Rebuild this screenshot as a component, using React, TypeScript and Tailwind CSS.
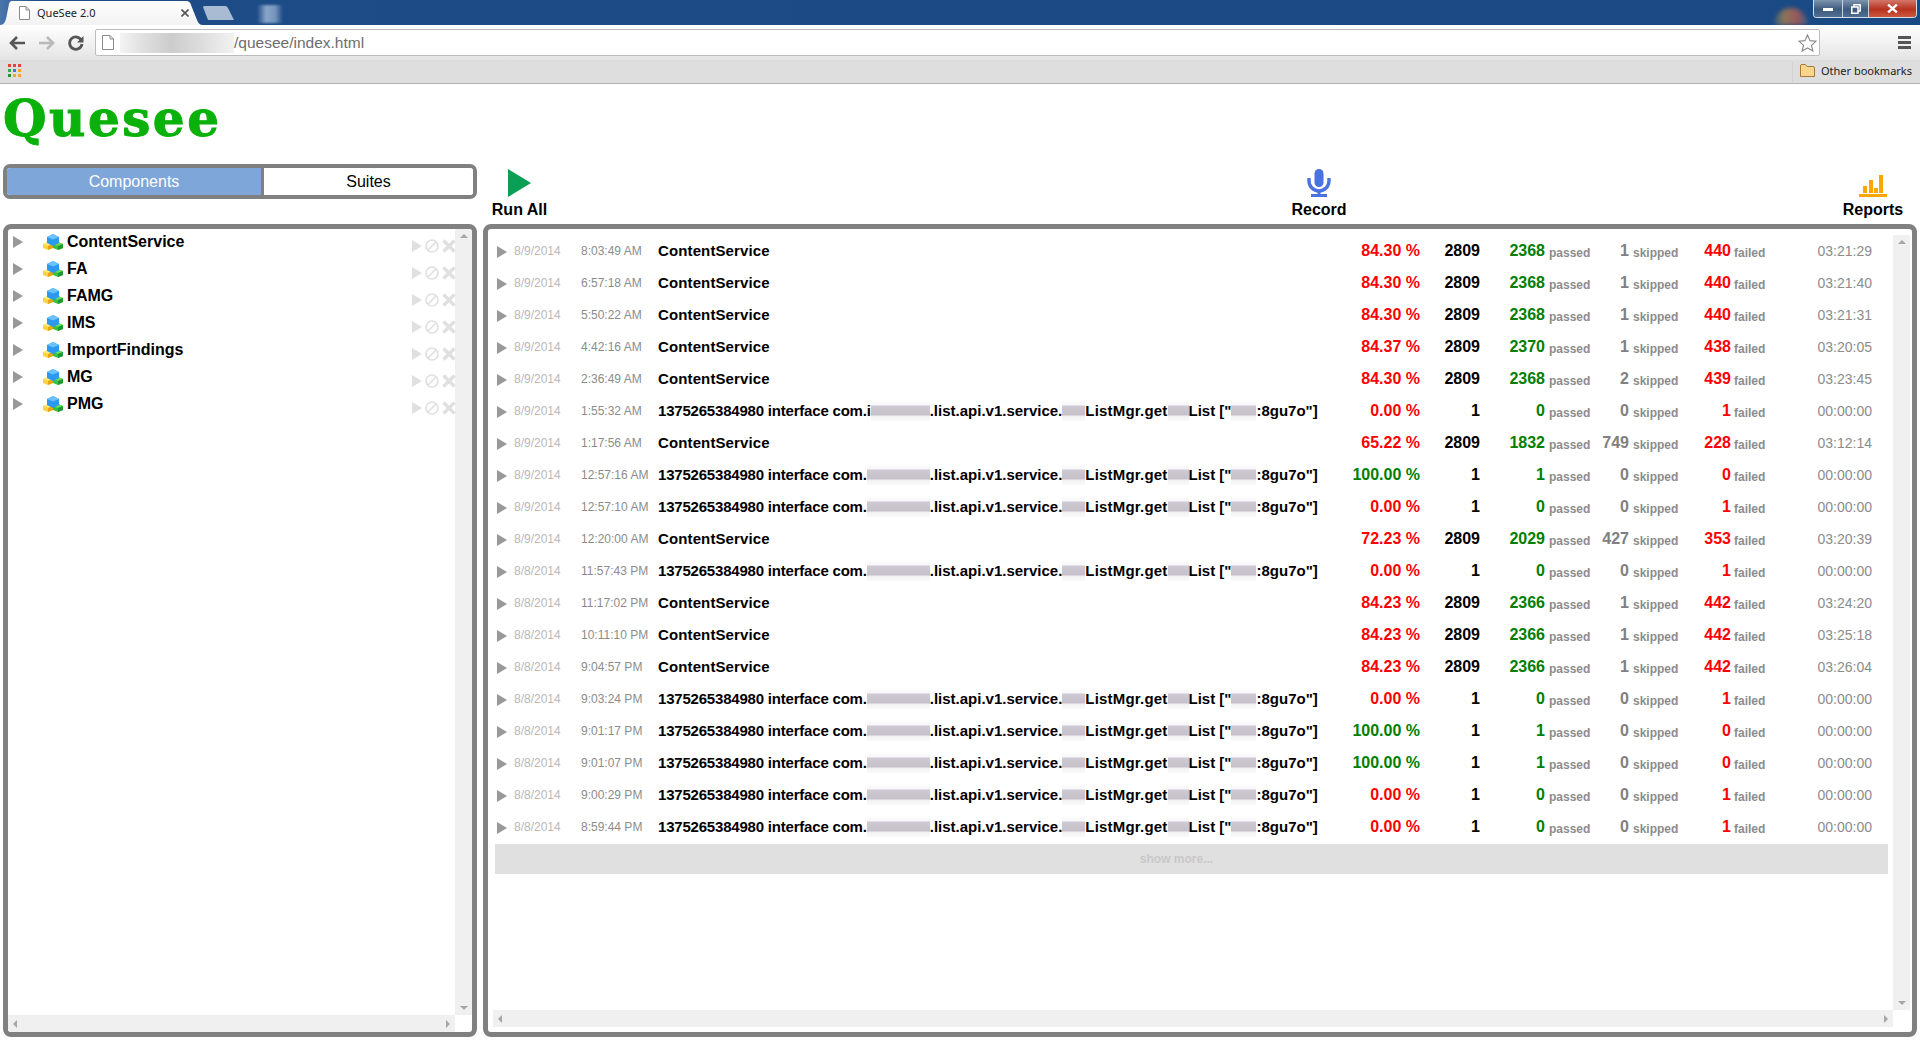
import React from "react";

const SANS = "font-['Liberation_Sans',Arial,sans-serif]";

function Blur({ w }: { w: number }) {
  return (
    <span
      className="inline-block h-[20px] align-[-5px] bg-[linear-gradient(180deg,#fbfbfb_0%,#f8f7f9_22%,#cfc9d2_23%,#c6c0ca_72%,#f1f1f1_73%,#fbfbfb_100%)]"
      style={{ width: w }}
    />
  );
}

function Arrow({ className }: { className: string }) {
  return (
    <svg viewBox="0 0 10 12" className={className} fill="currentColor">
      <path d="M0 0 L10 6 L0 12 Z" />
    </svg>
  );
}

function Cubes() {
  return (
    <svg viewBox="0 0 20 16" className="w-[20px] h-[16px] shrink-0">
      <path d="M0 10 L5 8 L10 10 L10 14 L5 16 L0 14 Z" fill="#fbd33a" />
      <path d="M0 10 L5 12 L10 10 L5 8 Z" fill="#ffe97a" />
      <path d="M5 12 L10 10 L10 14 L5 16 Z" fill="#e3a80f" />
      <path d="M10 10 L15 8 L20 10 L20 14 L15 16 L10 14 Z" fill="#3fbf3f" />
      <path d="M10 10 L15 12 L20 10 L15 8 Z" fill="#6adc5c" />
      <path d="M15 12 L20 10 L20 14 L15 16 Z" fill="#1e9a34" />
      <path d="M4 3 L10 0 L16 3 L16 9 L10 12 L4 9 Z" fill="#2c98f0" />
      <path d="M4 3 L10 5.5 L16 3 L10 0 Z" fill="#6cc2fb" />
    </svg>
  );
}

const tree = ["ContentService", "FA", "FAMG", "IMS", "ImportFindings", "MG", "PMG"];

function TreeRow({ name }: { name: string }) {
  return (
    <div className="h-[27px] flex items-center relative">
      <Arrow className="w-[10px] h-[12px] ml-[5px] text-[#999999] shrink-0" />
      <span className="w-[20px] ml-[20px] shrink-0 flex">
        <Cubes />
      </span>
      <span className="ml-[4px] text-[16px] font-bold text-black leading-none">{name}</span>
      <div className="ml-auto mr-[-1px] flex items-center gap-[3px] mt-[8px] text-[#e0e0e0]">
        <Arrow className="w-[10px] h-[14px]" />
        <svg viewBox="0 0 14 14" className="w-[14px] h-[14px]" fill="none" stroke="currentColor" strokeWidth="1.7">
          <circle cx="7" cy="7" r="6" />
          <path d="M3 11 L11 3" />
        </svg>
        <svg viewBox="0 0 14 14" className="w-[14px] h-[14px]" fill="none" stroke="currentColor" strokeWidth="3.4">
          <path d="M1.5 1.5 L12.5 12.5 M12.5 1.5 L1.5 12.5" />
        </svg>
      </div>
    </div>
  );
}

type Row = [string, string, number, string, string, string, string, string, string];
const C = 0;
const I = 1;
const rows: Row[] = [
  ["8/9/2014", "8:03:49 AM", C, "84.30 %", "2809", "2368", "1", "440", "03:21:29"],
  ["8/9/2014", "6:57:18 AM", C, "84.30 %", "2809", "2368", "1", "440", "03:21:40"],
  ["8/9/2014", "5:50:22 AM", C, "84.30 %", "2809", "2368", "1", "440", "03:21:31"],
  ["8/9/2014", "4:42:16 AM", C, "84.37 %", "2809", "2370", "1", "438", "03:20:05"],
  ["8/9/2014", "2:36:49 AM", C, "84.30 %", "2809", "2368", "2", "439", "03:23:45"],
  ["8/9/2014", "1:55:32 AM", I, "0.00 %", "1", "0", "0", "1", "00:00:00"],
  ["8/9/2014", "1:17:56 AM", C, "65.22 %", "2809", "1832", "749", "228", "03:12:14"],
  ["8/9/2014", "12:57:16 AM", I, "100.00 %", "1", "1", "0", "0", "00:00:00"],
  ["8/9/2014", "12:57:10 AM", I, "0.00 %", "1", "0", "0", "1", "00:00:00"],
  ["8/9/2014", "12:20:00 AM", C, "72.23 %", "2809", "2029", "427", "353", "03:20:39"],
  ["8/8/2014", "11:57:43 PM", I, "0.00 %", "1", "0", "0", "1", "00:00:00"],
  ["8/8/2014", "11:17:02 PM", C, "84.23 %", "2809", "2366", "1", "442", "03:24:20"],
  ["8/8/2014", "10:11:10 PM", C, "84.23 %", "2809", "2366", "1", "442", "03:25:18"],
  ["8/8/2014", "9:04:57 PM", C, "84.23 %", "2809", "2366", "1", "442", "03:26:04"],
  ["8/8/2014", "9:03:24 PM", I, "0.00 %", "1", "0", "0", "1", "00:00:00"],
  ["8/8/2014", "9:01:17 PM", I, "100.00 %", "1", "1", "0", "0", "00:00:00"],
  ["8/8/2014", "9:01:07 PM", I, "100.00 %", "1", "1", "0", "0", "00:00:00"],
  ["8/8/2014", "9:00:29 PM", I, "0.00 %", "1", "0", "0", "1", "00:00:00"],
  ["8/8/2014", "8:59:44 PM", I, "0.00 %", "1", "0", "0", "1", "00:00:00"],
];

function Name({ kind, index }: { kind: number; index: number }) {
  if (kind === C) return <span className="tracking-[0.12px]">ContentService</span>;
  return (
    <span className="whitespace-nowrap">
      <span className="tracking-[-0.2px]">1375265384980 interface com.{index === 5 ? "i" : ""}</span>
      <Blur w={index === 5 ? 59 : 63} />
      .list.api.v1.service.
      <Blur w={23} />
      <span className="tracking-[0.2px]">ListMgr.get</span>
      <Blur w={21} />
      List ["
      <Blur w={25} />
      :8gu7o"]
    </span>
  );
}

function ResultRow({ r, index }: { r: Row; index: number }) {
  const ok = r[3].startsWith("100");
  return (
    <div className="h-[32px] flex items-center text-black whitespace-nowrap">
      <Arrow className="w-[10px] h-[12px] ml-[9px] mt-[2px] text-[#999999] shrink-0" />
      <span className="w-[67px] ml-[7px] text-[12px] text-[#b8b8b8] shrink-0">{r[0]}</span>
      <span className="w-[77px] text-[12px] text-[#8c8c8c] shrink-0">{r[1]}</span>
      <span className="w-[682px] text-[15px] font-bold shrink-0">
        <Name kind={r[2]} index={index} />
      </span>
      <span className={`w-[80px] text-right text-[16px] font-bold shrink-0 ${ok ? "text-[#008000]" : "text-[#ff0000]"}`}>{r[3]}</span>
      <span className="w-[60px] text-right text-[16px] font-bold shrink-0">{r[4]}</span>
      <span className="w-[65px] text-right text-[16px] font-bold text-[#008000] shrink-0">{r[5]}</span>
      <span className="w-[47px] pl-[4px] text-[12px] font-bold text-[#8c8c8c] mt-[3px] shrink-0">passed</span>
      <span className="w-[37px] text-right text-[16px] font-bold text-[#808080] shrink-0">{r[6]}</span>
      <span className="w-[66px] pl-[4px] text-[12px] font-bold text-[#8c8c8c] mt-[3px] shrink-0">skipped</span>
      <span className="w-[36px] text-right text-[16px] font-bold text-[#ff0000] shrink-0">{r[7]}</span>
      <span className="w-[79px] pl-[3px] text-[12px] font-bold text-[#8c8c8c] mt-[3px] shrink-0">failed</span>
      <span className="w-[62px] text-right text-[14px] text-[#8c8c8c] shrink-0">{r[8]}</span>
    </div>
  );
}

function ScrollV({ className = "" }: { className?: string }) {
  return (
    <div className={`w-[17px] bg-[#f0f0f0] flex flex-col items-center justify-between py-[5px] shrink-0 ${className}`}>
      <div className="w-0 h-0 border-x-[4px] border-x-transparent border-b-[4px] border-b-[#a6a6a6]" />
      <div className="w-0 h-0 border-x-[4px] border-x-transparent border-t-[4px] border-t-[#a6a6a6]" />
    </div>
  );
}

function ScrollH({ className = "" }: { className?: string }) {
  return (
    <div className={`h-[17px] bg-[#f0f0f0] flex items-center justify-between px-[5px] ${className}`}>
      <div className="w-0 h-0 border-y-[4px] border-y-transparent border-r-[4px] border-r-[#a6a6a6]" />
      <div className="w-0 h-0 border-y-[4px] border-y-transparent border-l-[4px] border-l-[#a6a6a6]" />
    </div>
  );
}

function BrowserChrome() {
  return (
    <div className="shrink-0">
      <div className="h-[25px] bg-[linear-gradient(90deg,#4a76ab_0%,#1d4c87_2%,#1b4a85_60%,#1a4a84_100%)] flex relative overflow-hidden">
        <div className="relative w-[203px] h-[25px] flex items-center shrink-0">
          <svg viewBox="0 0 203 25" className="absolute inset-0 w-[203px] h-[25px]" preserveAspectRatio="none">
            <defs>
              <linearGradient id="tabg" x1="0" y1="0" x2="0" y2="1">
                <stop offset="0" stopColor="#ffffff" />
                <stop offset="1" stopColor="#f2f2f2" />
              </linearGradient>
            </defs>
            <path d="M0 25 C5 25 6 20 7 14 L9 4 C10 1 11 1 13 1 L186 1 C189 1 190 2 191 5 L197 20 C198 23 200 25 203 25 Z" fill="url(#tabg)" />
          </svg>
          <svg viewBox="0 0 11 14" className="relative ml-[19px] w-[11px] h-[14px] shrink-0" fill="#ffffff" stroke="#8a8a8a">
            <path d="M0.5 0.5 H7 L10.5 4 V13.5 H0.5 Z M7 0.5 V4 H10.5" />
          </svg>
          <span className="relative ml-[7px] w-[144px] text-[11px] text-[#222] font-['Noto_Sans',sans-serif] leading-none">QueSee 2.0</span>
          <svg viewBox="0 0 8 8" className="relative w-[8px] h-[8px] shrink-0" stroke="#555" strokeWidth="1.6">
            <path d="M0.5 0.5 L7.5 7.5 M7.5 0.5 L0.5 7.5" />
          </svg>
        </div>
        <svg viewBox="0 0 31 14" className="w-[31px] h-[14px] mt-[6px] shrink-0">
          <path d="M0 1 Q0 0 2 0 H22 Q24 0 25 2 L31 14 H5 Z" fill="#a9bbd3" />
        </svg>
        <div className="w-[26px] h-[18px] ml-[23px] mt-[5px] bg-[linear-gradient(90deg,#1d4c87,#8aa6ca_35%,#7695bd_70%,#1d4c87)] blur-[1px] shrink-0" />
        <div className="ml-auto mr-[112px] mt-[8px] w-[34px] h-[17px] rounded-t-full bg-[linear-gradient(90deg,#3d6180,#a8804e_30%,#b85a52_70%,#3d5f86)] blur-[2px] opacity-80" />
        <div className="absolute right-[3px] top-0 w-[104px] h-[18px] flex border border-t-0 border-[#d6dde6] rounded-b-[4px] overflow-hidden">
          <div className="w-[29px] bg-[linear-gradient(180deg,#7d93ad,#3d5a7f_55%,#516f92)] flex items-center justify-center border-r border-[#c8d2de]">
            <div className="w-[10px] h-[3px] mt-[2px] bg-white" />
          </div>
          <div className="w-[26px] bg-[linear-gradient(180deg,#7d93ad,#3d5a7f_55%,#516f92)] flex items-center justify-center border-r border-[#c8d2de]">
            <svg viewBox="0 0 10 10" className="w-[10px] h-[10px]" fill="none" stroke="#fff" strokeWidth="1.5">
              <path d="M3 2.5 V0.8 H9.2 V7 H7.5 M0.8 3 H7 V9.2 H0.8 Z" />
            </svg>
          </div>
          <div className="flex-1 bg-[linear-gradient(180deg,#d2776a,#b8321f_55%,#cc5a3f)] flex items-center justify-center">
            <svg viewBox="0 0 10 8" className="w-[11px] h-[9px]" stroke="#fff" strokeWidth="2.2">
              <path d="M1 0.5 L9 7.5 M9 0.5 L1 7.5" />
            </svg>
          </div>
        </div>
      </div>
      <div className="h-[35px] bg-[linear-gradient(180deg,#ffffff,#e4e4e4)] flex items-center">
        <svg viewBox="0 0 16 14" className="ml-[9px] w-[16px] h-[14px] shrink-0" fill="none" stroke="#555555" strokeWidth="2.6">
          <path d="M16 7 H3 M8 1 L2 7 L8 13" />
        </svg>
        <svg viewBox="0 0 16 14" className="ml-[14px] w-[16px] h-[14px] shrink-0" fill="none" stroke="#b9b9b9" strokeWidth="2.6">
          <path d="M0 7 H13 M8 1 L14 7 L8 13" />
        </svg>
        <svg viewBox="0 0 16 16" className="ml-[13px] w-[16px] h-[16px] shrink-0" fill="none" stroke="#555555" strokeWidth="2.8">
          <path d="M13.5 5.5 A6.2 6.2 0 1 0 14 9" />
          <path d="M15.5 1 V7.5 H9 Z" fill="#555555" stroke="none" />
        </svg>
        <div className="ml-[11px] w-[1725px] h-[27px] bg-white border border-[#bcbcbc] rounded-[2px] flex items-center shrink-0">
          <svg viewBox="0 0 12 15" className="ml-[6px] w-[12px] h-[15px] shrink-0" fill="#ffffff" stroke="#8a8a8a">
            <path d="M0.5 0.5 H8 L11.5 4 V14.5 H0.5 Z M8 0.5 V4 H11.5" />
          </svg>
          <span className="ml-[6px] w-[114px] h-[20px] shrink-0 bg-[linear-gradient(90deg,#f4f4f4,#e0e0e0_20%,#cccccc_45%,#dcdcdc_70%,#f2f2f2)]" />
          <span className={`text-[15.5px] text-[#6d6d6d] leading-none ${SANS}`}>/quesee/index.html</span>
          <svg viewBox="0 0 20 19" className="ml-auto mr-[2px] w-[19px] h-[18px]" fill="#ffffff" stroke="#8a8a8a" strokeWidth="1.2">
            <path d="M10 1 L12.7 7 L19 7.6 L14.2 12 L15.7 18 L10 14.8 L4.3 18 L5.8 12 L1 7.6 L7.3 7 Z" />
          </svg>
        </div>
        <div className="ml-[78px] w-[13px] flex flex-col gap-[2px] shrink-0">
          <div className="h-[3px] bg-[#555]" />
          <div className="h-[3px] bg-[#555]" />
          <div className="h-[3px] bg-[#555]" />
        </div>
      </div>
      <div className="h-[24px] bg-[#dedede] border-b border-[#b0b0b0] flex items-center">
        <div className="ml-[8px] -mt-[3px] grid grid-cols-3 gap-[2px] w-[13px] shrink-0">
          <div className="h-[3px] bg-[#e8403a]" />
          <div className="h-[3px] bg-[#e8403a]" />
          <div className="h-[3px] bg-[#e8403a]" />
          <div className="h-[3px] bg-[#3fa34d]" />
          <div className="h-[3px] bg-[#3b78e7]" />
          <div className="h-[3px] bg-[#f5a623]" />
          <div className="h-[3px] bg-[#2f8f46]" />
          <div className="h-[3px] bg-[#f5a623]" />
          <div className="h-[3px] bg-[#f5a623]" />
        </div>
        <div className="ml-auto w-px h-[20px] bg-[#d2d2d2]" />
        <svg viewBox="0 0 15 13" className="ml-[7px] -mt-[2px] w-[15px] h-[13px] shrink-0" fill="#fbd68c" stroke="#a9793a">
          <path d="M0.5 2 Q0.5 0.5 2 0.5 H5.5 L7 2.5 H13 Q14.5 2.5 14.5 4 V12.5 H0.5 Z" />
        </svg>
        <span className="ml-[6px] mr-[8px] -mt-[2px] text-[11px] text-[#222] font-['Noto_Sans',sans-serif] leading-none">Other bookmarks</span>
      </div>
    </div>
  );
}

export default function App() {
  return (
    <div className={`w-[1920px] h-[1040px] overflow-hidden bg-white flex flex-col ${SANS}`}>
      <BrowserChrome />
      <div className="h-[80px] pl-[3px] shrink-0">
        <div className="mt-[5px] text-[50px] leading-[60px] font-bold tracking-[2.5px] text-[#0ab10a] [-webkit-text-stroke:1px_#0ab10a] font-['DejaVu_Serif',serif]">Quesee</div>
      </div>
      <div className="flex-1 min-h-0 flex gap-[6px] pl-[3px] pr-[3px] pb-[3px]">
        <div className="w-[474px] flex flex-col shrink-0">
          <div className="h-[35px] border-[4px] border-[#808080] rounded-[7px] flex text-[16px] overflow-hidden shrink-0">
            <div className="w-[254px] bg-[#7ea6d8] text-white flex items-center justify-center">Components</div>
            <div className="flex-1 border-l-[3px] border-[#808080] bg-white text-black flex items-center justify-center">Suites</div>
          </div>
          <div className="mt-[25px] flex-1 min-h-0 border-[5px] border-[#808080] rounded-[8px] flex flex-col overflow-hidden">
            <div className="flex-1 min-h-0 flex">
              <div className="flex-1 -mt-[1px]">
                {tree.map((t) => (
                  <TreeRow key={t} name={t} />
                ))}
              </div>
              <ScrollV />
            </div>
            <div className="flex h-[17px]">
              <ScrollH className="flex-1" />
              <div className="w-[17px]" />
            </div>
          </div>
        </div>
        <div className="flex-1 min-w-0 flex flex-col">
          <div className="h-[60px] flex items-start text-[16px] font-bold text-black shrink-0">
            <div className="ml-[9px] w-[55px] flex flex-col items-center">
              <svg viewBox="0 0 23 28" className="mt-[5px] w-[23px] h-[28px]">
                <path d="M0 0 L23 14 L0 28 Z" fill="#0a9f55" />
              </svg>
              <span className="mt-[1px] whitespace-nowrap">Run All</span>
            </div>
            <div className="ml-[739px] w-[66px] flex flex-col items-center">
              <svg viewBox="0 0 24 28" className="mt-[5px] w-[24px] h-[28px]">
                <rect x="7.5" y="0" width="9" height="18" rx="4.5" fill="#4a72e0" />
                <path d="M2 9 V12 A10 10 0 0 0 22 12 V9" fill="none" stroke="#4a72e0" strokeWidth="3.4" />
                <path d="M12 21 V26 M4 26.5 H20" stroke="#4a72e0" strokeWidth="3" fill="none" />
              </svg>
              <span className="mt-[1px]">Record</span>
            </div>
            <div className="ml-[491px] w-[60px] flex flex-col items-center">
              <svg viewBox="0 0 28 22" className="mt-[11px] w-[28px] h-[22px]">
                <path d="M4 11 H8 V18 H4 Z M15 13 H19 V18 H15 Z M20 0 H24 V18 H20 Z M10 5 H14 V18 H10 Z" fill="#ffa500" />
                <path d="M0 19 H28 V22 H0 Z" fill="#ffa500" />
              </svg>
              <span className="mt-[1px]">Reports</span>
            </div>
          </div>
          <div className="flex-1 min-h-0 border-[5px] border-[#808080] rounded-[8px] flex flex-col overflow-hidden">
            <div className="flex-1 min-h-0 flex pt-[6px]">
              <div className="flex-1 min-w-0 flex flex-col">
                {rows.map((r, i) => (
                  <ResultRow key={i} r={r} index={i} />
                ))}
                <div className="mt-[1px] ml-[7px] mr-[5px] h-[30px] pr-[30px] bg-[#e0e0e0] text-[12px] font-bold text-[#c8c8c8] flex items-center justify-center">show more...</div>
              </div>
              <ScrollV className="mr-[2px]" />
            </div>
            <div className="flex h-[17px] mb-[5px] pl-[5px] pr-[19px]">
              <ScrollH className="flex-1" />
            </div>
          </div>
        </div>
      </div>
    </div>
  );
}
